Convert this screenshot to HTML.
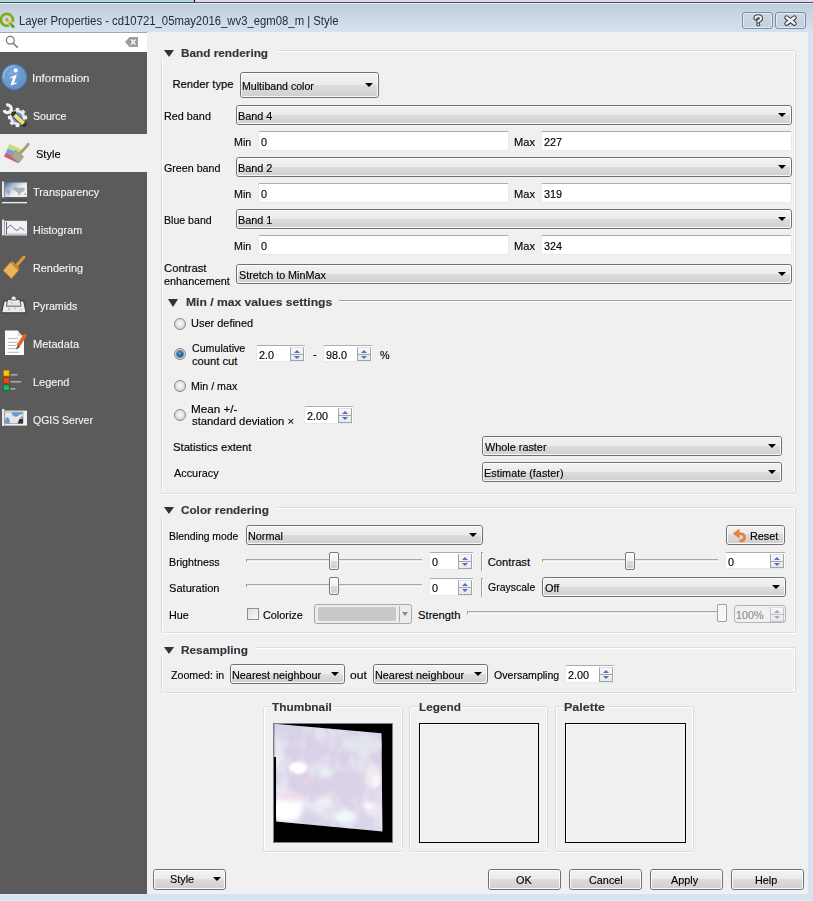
<!DOCTYPE html><html><head><meta charset="utf-8"><style>
html,body{margin:0;padding:0;}
body{width:813px;height:901px;position:relative;overflow:hidden;background:#f0f0f0;font-family:"Liberation Sans",sans-serif;}
.t{position:absolute;white-space:nowrap;line-height:1;transform-origin:0 0;-webkit-text-stroke:0.15px currentColor;}
.cb{position:absolute;box-sizing:border-box;border:1px solid #707070;border-radius:3px;background:linear-gradient(#f2f2f2 0%,#ebebeb 50%,#dddddd 50%,#cfcfcf 100%);}
.cbi{position:absolute;left:0;top:0;right:0;bottom:0;border:1px solid rgba(255,255,255,0.85);border-radius:2px;}
.arr{position:absolute;width:0;height:0;border-left:4px solid transparent;border-right:4px solid transparent;border-top:4px solid #000;}
.ed{position:absolute;box-sizing:border-box;background:#fff;border:1px solid #e3e9ef;border-top-color:#abadb3;border-radius:2px;}
.sp{position:absolute;box-sizing:border-box;border:1px solid #c9ced6;background:linear-gradient(#f7f8fa,#e6e9ee);}
.ua{position:absolute;width:0;height:0;border-left:3px solid transparent;border-right:3px solid transparent;border-bottom:3px solid #4a5f8c;}
.da{position:absolute;width:0;height:0;border-left:3px solid transparent;border-right:3px solid transparent;border-top:3px solid #4a5f8c;}
.bt{position:absolute;box-sizing:border-box;border:1px solid #707070;border-radius:3px;background:linear-gradient(#f2f2f2 0%,#ebebeb 45%,#dddddd 45%,#cfcfcf 100%);}
.bti{position:absolute;left:0;top:0;right:0;bottom:0;border:1px solid rgba(255,255,255,0.85);border-radius:2px;}
.gb{position:absolute;box-sizing:border-box;border:1px solid #d5dfe5;border-radius:2px;box-shadow:inset 1px 1px 0 #fff, inset -1px 0 0 #fff, 0 1px 0 #fff;}
.tri{position:absolute;width:0;height:0;border-left:5px solid transparent;border-right:5px solid transparent;border-top:7px solid #333;}
.rd{position:absolute;box-sizing:border-box;width:12px;height:12px;border-radius:50%;border:1px solid #8a8a8a;background:radial-gradient(circle at 50% 45%,#fbfbfb 0%,#e6e6e6 45%,#c8ccd0 80%,#f4f4f4 100%);}
.rdc{position:absolute;width:6px;height:6px;border-radius:50%;background:radial-gradient(circle at 45% 40%,#58c0f0 0%,#1d6aa8 45%,#0b3560 100%);box-shadow:0 0 0 1px rgba(20,50,90,0.55);}
.sh{position:absolute;box-sizing:border-box;border:1px solid #7b7b7b;border-radius:2px;background:linear-gradient(#fbfbfb 0%,#f0f0f0 50%,#dadada 50%,#d0d0d0 100%);box-shadow:inset 0 0 0 1px rgba(255,255,255,0.7);}
.si{position:absolute;}
</style></head><body>
<div style="position:absolute;left:0px;top:0px;width:194px;height:2px;background:#a9d7e3"></div>
<div style="position:absolute;left:194px;top:0px;width:1px;height:2px;background:#000"></div>
<div style="position:absolute;left:195px;top:0px;width:618px;height:2px;background:#e2daf0"></div>
<div style="position:absolute;left:0px;top:2px;width:813px;height:1px;background:#4d4d4d"></div>
<div style="position:absolute;left:0px;top:3px;width:813px;height:1px;background:#e6ecf2"></div>
<div style="position:absolute;left:0px;top:4px;width:813px;height:28px;background:linear-gradient(#bfcedc,#d6e3ef)"></div>
<div style="position:absolute;left:808px;top:32px;width:5px;height:869px;background:#d6e3f1"></div>
<div style="position:absolute;left:0px;top:894px;width:813px;height:7px;background:#d6e3f1"></div>
<div style="position:absolute;left:0px;top:900px;width:813px;height:1px;background:#e6edf5"></div>
<div style="position:absolute;left:0px;top:894px;width:147px;height:1px;background:#dce8f6"></div>
<div class="t" style="left:18.8995145631068px;top:15.24px;font-size:12px;color:#2a2a3a;transform:scaleX(0.9434);-webkit-text-stroke:0;">Layer Properties - cd10721_05may2016_wv3_egm08_m | Style</div>
<div style="position:absolute;left:742px;top:12px;width:31px;height:17px;box-sizing:border-box;border:1px solid #7d8ca8;border-radius:3px;background:linear-gradient(#cbd7e4,#c3d1e0);box-shadow:inset 0 0 0 1px rgba(255,255,255,0.5)"></div>
<div style="position:absolute;left:775px;top:12px;width:31px;height:17px;box-sizing:border-box;border:1px solid #7d8ca8;border-radius:3px;background:linear-gradient(#cbd7e4,#c3d1e0);box-shadow:inset 0 0 0 1px rgba(255,255,255,0.5)"></div>
<svg class="si" style="left:740px;top:10px" width="70" height="22" viewBox="740 10 70 22"><g fill="none" stroke-linecap="round" stroke-linejoin="round"><path d="M755.4 18.6 Q755.4 16.3 758.2 16.3 Q761 16.3 761 18.6 Q761 20.2 758.3 21 L758.3 22" stroke="#3c3c48" stroke-width="4"/><path d="M755.4 18.6 Q755.4 16.3 758.2 16.3 Q761 16.3 761 18.6 Q761 20.2 758.3 21 L758.3 22" stroke="#f6f6f6" stroke-width="1.9"/><path d="M786.6 17.6 L794.4 23.6 M794.4 17.6 L786.6 23.6" stroke="#3c3c48" stroke-width="4.6"/><path d="M786.6 17.6 L794.4 23.6 M794.4 17.6 L786.6 23.6" stroke="#f4f4f4" stroke-width="2.5"/></g><circle cx="758.3" cy="24.4" r="1.9" fill="#3c3c48"/><circle cx="758.3" cy="24.4" r="0.9" fill="#f6f6f6"/></svg>
<div style="position:absolute;left:0px;top:32px;width:147px;height:20px;background:#fff"></div>
<div style="position:absolute;left:0px;top:32px;width:147px;height:1px;background:#a7a7a7"></div>
<div style="position:absolute;left:0px;top:52px;width:147px;height:842px;background:#5b5b5b"></div>
<div style="position:absolute;left:0px;top:134px;width:147px;height:38px;background:#f0f0f0"></div>
<div class="t" style="left:32.45399061032864px;top:73.02px;font-size:11.2px;color:#f2f2f2;transform:scaleX(1.0273);">Information</div>
<div class="t" style="left:33.018819188191884px;top:110.97px;font-size:11.2px;color:#f2f2f2;transform:scaleX(0.9452);">Source</div>
<div class="t" style="left:35.89787234042553px;top:148.92px;font-size:11.2px;color:#000;transform:scaleX(0.9863);">Style</div>
<div class="t" style="left:33.25234521575985px;top:186.87px;font-size:11.2px;color:#f2f2f2;transform:scaleX(0.9729);">Transparency</div>
<div class="t" style="left:32.63984575835475px;top:224.82px;font-size:11.2px;color:#f2f2f2;transform:scaleX(0.9655);">Histogram</div>
<div class="t" style="left:32.63613231552163px;top:262.77px;font-size:11.2px;color:#f2f2f2;transform:scaleX(0.9696);">Rendering</div>
<div class="t" style="left:32.654901960784315px;top:300.72px;font-size:11.2px;color:#f2f2f2;transform:scaleX(0.9486);">Pyramids</div>
<div class="t" style="left:32.619166666666665px;top:338.67px;font-size:11.2px;color:#f2f2f2;transform:scaleX(0.9887);">Metadata</div>
<div class="t" style="left:32.63060498220641px;top:376.62px;font-size:11.2px;color:#f2f2f2;transform:scaleX(0.9759);">Legend</div>
<div class="t" style="left:33.02369477911647px;top:414.57px;font-size:11.2px;color:#f2f2f2;transform:scaleX(0.9356);">QGIS Server</div>
<svg class="si" style="left:0;top:0" width="147" height="440" viewBox="0 0 147 440">
<defs>
<linearGradient id="qg" x1="0" y1="0" x2="1" y2="1"><stop offset="0" stop-color="#f07a10"/><stop offset="0.35" stop-color="#e9d04a"/><stop offset="0.55" stop-color="#7cb034"/><stop offset="1" stop-color="#5a9a22"/></linearGradient>
<radialGradient id="ig" cx="0.4" cy="0.35" r="0.7"><stop offset="0" stop-color="#7aa8dc"/><stop offset="1" stop-color="#5d8fcb"/></radialGradient>
<linearGradient id="tgr" x1="0" y1="0" x2="0.8" y2="0.6"><stop offset="0" stop-color="#3c68aa"/><stop offset="0.4" stop-color="#a9bad0"/><stop offset="0.75" stop-color="#e6eaee"/><stop offset="1" stop-color="#f2f2f2"/></linearGradient>
</defs>
<!-- QGIS logo -->
<path d="M8.95 25.44 A6 6 0 1 1 12.54 21.85" fill="none" stroke="#80ac1c" stroke-width="2.7"/>
<path d="M6.6 19.5 L13.2 26.6" stroke="url(#qg)" stroke-width="2.8" stroke-linecap="round"/>
<!-- search -->
<circle cx="10.3" cy="40.3" r="3.9" fill="none" stroke="#7a7a7a" stroke-width="1.3"/>
<path d="M13.2 43.2 L17.3 47.3" stroke="#7a7a7a" stroke-width="1.6" stroke-linecap="round"/>
<path d="M125 42 L129.5 37 L138 37 L138 47 L129.5 47 Z" fill="#9d9d9d"/>
<path d="M131 39.5 L135.5 44.5 M135.5 39.5 L131 44.5" stroke="#fff" stroke-width="1.2"/>
<!-- Information -->
<circle cx="14.2" cy="77" r="12.5" fill="url(#ig)" stroke="#4c7cc0" stroke-width="0.8"/>
<path d="M4 79 A10.5 10.5 0 0 1 15 66" fill="none" stroke="#a9c6ea" stroke-width="1.1" opacity="0.8"/>
<circle cx="15.7" cy="70.4" r="2.1" fill="#fff"/>
<path d="M10.6 77.2 L16.8 74.6 L13.9 83.4 L16.8 82.3 L16.4 83.8 L10.4 85.6 L13.2 77.6 L10.3 78.4 Z" fill="#fff"/>
<!-- Source -->
<g transform="translate(17.5 117.5)">
<circle r="7.6" fill="#ececec" stroke="#d0d0d0" stroke-width="0.6"/>
<g fill="#ececec"><rect x="-1.8" y="-9.6" width="3.6" height="3"/><rect x="-1.8" y="6.6" width="3.6" height="3"/><rect x="-9.6" y="-1.8" width="3" height="3.6"/><rect x="6.6" y="-1.8" width="3" height="3.6"/>
<rect x="-1.8" y="-9.6" width="3.6" height="3" transform="rotate(45)"/><rect x="-1.8" y="6.6" width="3.6" height="3" transform="rotate(45)"/><rect x="-9.6" y="-1.8" width="3" height="3.6" transform="rotate(45)"/><rect x="6.6" y="-1.8" width="3" height="3.6" transform="rotate(45)"/></g>
<circle r="5.2" fill="#6a9ad6"/>
</g>
<path d="M6.2 105.2 A3.8 3.8 0 1 1 3.9 110.1" fill="none" stroke="#f0f0f0" stroke-width="3.2"/><path d="M10.2 111.2 L14.5 115.5" stroke="#e8e8e8" stroke-width="3.4"/>

<path d="M13.8 114.2 L24.2 124.3" stroke="#3a3a2a" stroke-width="5.6" stroke-linecap="round"/>
<path d="M14.6 115 L23.6 123.6" stroke="#f0dc7a" stroke-width="4.2" stroke-linecap="butt"/>
<path d="M13.5 113.8 L16 111.5" stroke="#222" stroke-width="1.2"/>
<!-- Style -->
<path d="M9.5 144 L22 149.4 L20.6 153.6 L7.6 148.6 Z" fill="#c6dc7c"/>
<path d="M7.6 148.6 L20.6 153.6 L19.2 157.8 L5.8 152.8 Z" fill="#6aa8e4"/>
<path d="M5.8 152.8 L19.2 157.8 L17.6 163 L4 156.5 Z" fill="#d05878"/>
<path d="M15.6 150.4 L23.6 156.6 L18.6 163 L10.6 156.2 Z" fill="#a8a890" stroke="#8a8468" stroke-width="0.6"/>
<path d="M28.4 144.2 L20.6 153" stroke="#aa9f78" stroke-width="2.8" stroke-linecap="round"/>
<!-- Transparency -->
<rect x="2" y="181.5" width="2.2" height="16" fill="#e8e8e8"/>
<rect x="4.6" y="182.5" width="22.4" height="14.5" fill="url(#tgr)"/>
<path d="M6.5 190 q2 -1 3.5 0.5 q0.5 3 -1.5 5 q-1.5 -2 -2 -5.5 z M13 188 q3 -1.5 5 0 q4 -1 7 0.5 l-1 3 q-2 0 -3 1 q-1 2 -2 3.5 q-1 -2 -1.5 -4 q-2 0 -4.5 -4 z M24 193 q1.5 0 2.5 1 l-1 1.5 q-1 0 -1.5 -2.5 z" fill="#98a0a6" opacity="0.75"/>
<rect x="2" y="199" width="25" height="2" fill="#4a4a4a"/><path d="M3 200 H27" stroke="#6a6a6a" stroke-width="0.8" stroke-dasharray="0.8 1.2"/>
<rect x="4" y="198.6" width="2.6" height="2.8" fill="#3260a8"/>
<rect x="2" y="202" width="25" height="1.3" fill="#f2f2f2"/>
<!-- Histogram -->
<rect x="2" y="219.5" width="2.2" height="16" fill="#e6e6e6"/>
<rect x="4.6" y="220.8" width="22.4" height="14.5" fill="#f1f1f1"/>
<rect x="4.6" y="233.4" width="22.4" height="1.9" fill="#c9c9c9"/>
<rect x="6" y="222" width="0.9" height="12" fill="#555"/>
<path d="M6.7 228.7 L10.4 225 L13.4 228 L17 230.6 L20.4 227.4 L24.3 230.4" fill="none" stroke="#3d64a8" stroke-width="0.9"/>
<!-- Rendering -->
<path d="M24 257 L16.5 265.5" stroke="#d99a36" stroke-width="3" stroke-linecap="round"/>
<path d="M10.4 262.2 L18.6 270.2 L11.4 278.6 L3.2 270.6 Z" fill="#e8b860" stroke="#c08030" stroke-width="0.8"/>
<path d="M12.4 261 L19.4 268 L17.6 270.4 L10.6 263.2 Z" fill="#d08a2a"/>
<!-- Pyramids -->
<path d="M4.2 301 L23.6 301 L26.2 312.8 L1.6 312.8 Z" fill="#ececec" stroke="#2a2a2a" stroke-width="0.9"/>
<path d="M7.6 299.4 L19.8 299.4 L21 306.2 L6.4 306.2 Z" fill="#e6e6e6" stroke="#3a3a3a" stroke-width="0.8"/>
<path d="M10.8 300 Q11 296 13.6 296 Q16.4 296 16.6 300 Z" fill="#f2f2f2" stroke="#3a3a3a" stroke-width="0.7"/>
<g fill="#b8bcb8" opacity="0.8"><circle cx="9" cy="309" r="1.2"/><circle cx="15" cy="308.5" r="1.1"/><circle cx="21" cy="310" r="1"/><circle cx="12" cy="303" r="0.9"/></g>
<!-- Metadata -->
<path d="M5 330.6 L17.6 330.6 L21.8 335.6 L24 335.6 L24 355.1 L5 355.1 Z" fill="#fdfdfd"/>
<path d="M17.6 330.6 L17.6 336 L21.8 336 Z" fill="#e0e0e0"/>
<g stroke="#b8b8b8" stroke-width="1"><path d="M7.7 338.6 H18 M7.7 342.3 H17 M7.7 345.5 H16 M7.7 348.6 H17 M7.7 352.3 H19"/></g>
<path d="M25.6 334.6 L18 346" stroke="#e2642a" stroke-width="3.6"/>
<path d="M18.2 345.6 L16.4 348.8 L19.2 347.2 Z" fill="#555" stroke="#555" stroke-width="1"/>
<!-- Legend -->
<rect x="3.6" y="370.2" width="5.6" height="5.8" fill="#f8c800" stroke="#b07800" stroke-width="0.6"/>
<rect x="3.6" y="377.6" width="5.6" height="5.8" fill="#e84a14" stroke="#9a2a00" stroke-width="0.6"/>
<rect x="3.6" y="385" width="5.6" height="5.6" fill="#1cb85a" stroke="#0a5a2a" stroke-width="0.6"/>
<rect x="10.6" y="374" width="7" height="1.6" fill="#a8a8a8"/>
<rect x="10.6" y="381" width="10.6" height="1.6" fill="#a8a8a8"/>
<rect x="10.6" y="388" width="4.6" height="1.6" fill="#a8a8a8"/>
<!-- QGIS Server -->
<rect x="2" y="409" width="2.4" height="17" fill="#e8e8e8"/>
<rect x="4.6" y="410.6" width="22.4" height="15" fill="#f0f0f0"/>
<rect x="4.8" y="412" width="18.2" height="11.5" fill="#e6e6e6" stroke="#777" stroke-width="0.5"/>
<path d="M12 412.3 L23 412.3 L22.8 413.5 Q19 415 17 416.6 Q14 417 12.5 415 Q11 413.6 12 412.3 Z" fill="#6a9ad6"/>
<path d="M4.9 423.4 L4.9 420 Q6 416.6 8 417 Q9.5 419 10 423.4 Z" fill="#6a9ad6"/>
<path d="M19.6 418.6 Q21 416.2 23 416.2 L23 419 Z" fill="#6a9ad6"/>
<path d="M17.6 423.6 L23 423.6 L23 419 L19.4 419 Z" fill="#333"/>
</svg>
<div class="gb" style="left:161px;top:50px;width:635px;height:444px;"></div>
<div style="position:absolute;left:160px;top:47px;width:116px;height:12px;background:#f0f0f0"></div>
<div class="tri" style="left:164px;top:50px;"></div>
<div class="t" style="left:181.1962441314554px;top:46.98px;font-size:11.6px;font-weight:bold;color:#30363e;transform:scaleX(1.0162);">Band rendering</div>
<div class="t" style="left:172.51004273504273px;top:79.22px;font-size:11.2px;color:#000;">Render type</div>
<div class="cb" style="left:240px;top:72px;width:139px;height:26px;"><div class="cbi"></div></div>
<div class="arr" style="left:365px;top:83px;"></div>
<div class="t" style="left:242.15595238095239px;top:80.82px;font-size:11.2px;color:#000;transform:scaleX(0.9474);">Multiband color</div>
<div class="t" style="left:163.5387533875339px;top:111.22px;font-size:11.2px;color:#000;transform:scaleX(0.9667);">Red band</div>
<div class="cb" style="left:236px;top:105px;width:556px;height:20px;"><div class="cbi"></div></div>
<div class="arr" style="left:778px;top:113px;"></div>
<div class="t" style="left:238.1358181818182px;top:110.82px;font-size:11.2px;color:#000;transform:scaleX(0.9700);">Band 4</div>
<div class="t" style="left:234.4480620155039px;top:136.62px;font-size:11.2px;color:#000;transform:scaleX(0.9563);">Min</div>
<div class="ed" style="left:258px;top:131px;width:251px;height:20px;"></div>
<div class="t" style="left:260.62963636363634px;top:136.82px;font-size:11.2px;color:#000;transform:scaleX(0.9700);">0</div>
<div class="t" style="left:513.7183544303798px;top:136.62px;font-size:11.2px;color:#000;transform:scaleX(0.9896);">Max</div>
<div class="ed" style="left:541px;top:131px;width:251px;height:20px;"></div>
<div class="t" style="left:543.5061818181819px;top:136.82px;font-size:11.2px;color:#000;transform:scaleX(0.9700);">227</div>
<div class="t" style="left:163.91384615384615px;top:163.22px;font-size:11.2px;color:#000;transform:scaleX(0.9549);">Green band</div>
<div class="cb" style="left:236px;top:157px;width:556px;height:20px;"><div class="cbi"></div></div>
<div class="arr" style="left:778px;top:165px;"></div>
<div class="t" style="left:238.1358181818182px;top:162.82px;font-size:11.2px;color:#000;transform:scaleX(0.9700);">Band 2</div>
<div class="t" style="left:234.4480620155039px;top:188.62px;font-size:11.2px;color:#000;transform:scaleX(0.9563);">Min</div>
<div class="ed" style="left:258px;top:183px;width:251px;height:20px;"></div>
<div class="t" style="left:260.62963636363634px;top:188.82px;font-size:11.2px;color:#000;transform:scaleX(0.9700);">0</div>
<div class="t" style="left:513.7183544303798px;top:188.62px;font-size:11.2px;color:#000;transform:scaleX(0.9896);">Max</div>
<div class="ed" style="left:541px;top:183px;width:251px;height:20px;"></div>
<div class="t" style="left:543.6296363636363px;top:188.82px;font-size:11.2px;color:#000;transform:scaleX(0.9700);">319</div>
<div class="t" style="left:163.5574412532637px;top:215.22px;font-size:11.2px;color:#000;transform:scaleX(0.9457);">Blue band</div>
<div class="cb" style="left:236px;top:209px;width:556px;height:20px;"><div class="cbi"></div></div>
<div class="arr" style="left:778px;top:217px;"></div>
<div class="t" style="left:238.1358181818182px;top:214.82px;font-size:11.2px;color:#000;transform:scaleX(0.9700);">Band 1</div>
<div class="t" style="left:234.4480620155039px;top:240.62px;font-size:11.2px;color:#000;transform:scaleX(0.9563);">Min</div>
<div class="ed" style="left:258px;top:235px;width:251px;height:20px;"></div>
<div class="t" style="left:260.62963636363634px;top:240.82px;font-size:11.2px;color:#000;transform:scaleX(0.9700);">0</div>
<div class="t" style="left:513.7183544303798px;top:240.62px;font-size:11.2px;color:#000;transform:scaleX(0.9896);">Max</div>
<div class="ed" style="left:541px;top:235px;width:251px;height:20px;"></div>
<div class="t" style="left:543.6296363636363px;top:240.82px;font-size:11.2px;color:#000;transform:scaleX(0.9700);">324</div>
<div class="t" style="left:164.09024390243903px;top:262.82px;font-size:11.2px;color:#000;">Contrast</div>
<div class="t" style="left:164.10618181818182px;top:275.52px;font-size:11.2px;color:#000;transform:scaleX(0.9700);">enhancement</div>
<div class="cb" style="left:236px;top:264px;width:556px;height:20px;"><div class="cbi"></div></div>
<div class="arr" style="left:778px;top:272px;"></div>
<div class="t" style="left:238.50965909090908px;top:269.82px;font-size:11.2px;color:#000;transform:scaleX(0.9632);">Stretch to MinMax</div>
<div class="tri" style="left:167.5px;top:298.6px;border-left-width:5.5px;border-right-width:5.5px;border-top-width:8px"></div>
<div class="t" style="left:185.77278782112273px;top:296.48px;font-size:11.6px;font-weight:bold;color:#30363e;transform:scaleX(1.0459);">Min / max values settings</div>
<div style="position:absolute;left:339px;top:300px;width:453px;height:1px;background:#a0a0a0"></div>
<div style="position:absolute;left:339px;top:301px;width:453px;height:1px;background:#fff"></div>
<div class="rd" style="left:174px;top:318px;"></div>
<div class="t" style="left:191.12716049382715px;top:318.32px;font-size:11.2px;color:#000;transform:scaleX(0.9797);">User defined</div>
<div class="rd" style="left:174px;top:348px;"></div>
<div class="rdc" style="left:177px;top:351px;"></div>
<div class="t" style="left:192.01574074074074px;top:343.12px;font-size:11.2px;color:#000;transform:scaleX(0.9512);">Cumulative</div>
<div class="t" style="left:191.9912181303116px;top:355.52px;font-size:11.2px;color:#000;">count cut</div>
<div class="ed" style="left:256px;top:345px;width:50px;height:17px;"></div>
<div class="t" style="left:258.5061818181818px;top:349.82px;font-size:11.2px;color:#000;transform:scaleX(0.9700);">2.0</div>
<div class="sp" style="left:290px;top:347px;width:14px;height:14px;border-color:#a4a4a4;border-top-color:#e0e0e0"></div>
<div style="position:absolute;left:291px;top:354px;width:12px;height:1px;background:#a4a4a4"></div>
<div class="ua" style="left:294px;top:350px;border-bottom-color:#5470c0"></div>
<div class="da" style="left:294px;top:356px;border-top-color:#5470c0"></div>
<div class="t" style="left:313.0061818181818px;top:349.02px;font-size:11.2px;color:#000;transform:scaleX(0.9700);">-</div>
<div class="ed" style="left:323px;top:345px;width:50px;height:17px;"></div>
<div class="t" style="left:325.5061818181818px;top:349.82px;font-size:11.2px;color:#000;transform:scaleX(0.9700);">98.0</div>
<div class="sp" style="left:357px;top:347px;width:14px;height:14px;border-color:#a4a4a4;border-top-color:#e0e0e0"></div>
<div style="position:absolute;left:358px;top:354px;width:12px;height:1px;background:#a4a4a4"></div>
<div class="ua" style="left:361px;top:350px;border-bottom-color:#5470c0"></div>
<div class="da" style="left:361px;top:356px;border-top-color:#5470c0"></div>
<div class="t" style="left:379.62963636363634px;top:349.52px;font-size:11.2px;color:#000;transform:scaleX(0.9700);">%</div>
<div class="rd" style="left:174px;top:380px;"></div>
<div class="t" style="left:191.14986595174264px;top:380.62px;font-size:11.2px;color:#000;transform:scaleX(0.9542);">Min / max</div>
<div class="rd" style="left:174px;top:409px;"></div>
<div class="t" style="left:191.07011834319528px;top:404.22px;font-size:11.2px;color:#000;transform:scaleX(1.0437);">Mean +/-</div>
<div class="t" style="left:191.6145038167939px;top:416.02px;font-size:11.2px;color:#000;transform:scaleX(1.0096);">standard deviation ×</div>
<div class="ed" style="left:304px;top:406px;width:50px;height:18px;"></div>
<div class="t" style="left:306.5061818181818px;top:411.32px;font-size:11.2px;color:#000;transform:scaleX(0.9700);">2.00</div>
<div class="sp" style="left:338px;top:408px;width:14px;height:15px;border-color:#a4a4a4;border-top-color:#e0e0e0"></div>
<div style="position:absolute;left:339px;top:415px;width:12px;height:1px;background:#a4a4a4"></div>
<div class="ua" style="left:342px;top:411px;border-bottom-color:#5470c0"></div>
<div class="da" style="left:342px;top:417px;border-top-color:#5470c0"></div>
<div class="t" style="left:173.09150326797385px;top:441.72px;font-size:11.2px;color:#000;">Statistics extent</div>
<div class="cb" style="left:482px;top:436px;width:300px;height:20px;"><div class="cbi"></div></div>
<div class="arr" style="left:768px;top:444px;"></div>
<div class="t" style="left:485.0px;top:441.82px;font-size:11.2px;color:#000;transform:scaleX(0.9700);">Whole raster</div>
<div class="t" style="left:173.6px;top:467.72px;font-size:11.2px;color:#000;transform:scaleX(0.9700);">Accuracy</div>
<div class="cb" style="left:482px;top:462px;width:300px;height:20px;"><div class="cbi"></div></div>
<div class="arr" style="left:768px;top:470px;"></div>
<div class="t" style="left:484.1358181818182px;top:467.82px;font-size:11.2px;color:#000;transform:scaleX(0.9700);">Estimate (faster)</div>
<div class="gb" style="left:161px;top:507px;width:635px;height:126px;"></div>
<div style="position:absolute;left:160px;top:504px;width:116px;height:12px;background:#f0f0f0"></div>
<div class="tri" style="left:164px;top:507px;"></div>
<div class="t" style="left:181.46707692307692px;top:504.18px;font-size:11.6px;font-weight:bold;color:#30363e;transform:scaleX(1.0107);">Color rendering</div>
<div class="t" style="left:169.17239583333333px;top:530.52px;font-size:11.2px;color:#000;transform:scaleX(0.9289);">Blending mode</div>
<div class="cb" style="left:246px;top:525px;width:237px;height:20px;"><div class="cbi"></div></div>
<div class="arr" style="left:469px;top:533px;"></div>
<div class="t" style="left:248.1358181818182px;top:530.82px;font-size:11.2px;color:#000;transform:scaleX(0.9700);">Normal</div>
<div class="bt" style="left:726px;top:525px;width:59px;height:20px;"><div class="bti"></div></div>
<div class="t" style="left:749.7358181818182px;top:531.02px;font-size:11.2px;color:#000;transform:scaleX(0.9700);">Reset</div>
<svg class="si" style="left:728px;top:524px" width="22" height="22" viewBox="728 524 22 22"><path d="M732.8 533.6 L739.4 528.6 L739.4 538.6 Z" fill="#e8803c"/><path d="M738.6 533.6 Q744.6 533.4 744.6 537.4 Q744.6 540.6 740.6 540.8" fill="none" stroke="#e8803c" stroke-width="2.8" stroke-linecap="round"/></svg>
<div class="t" style="left:169.14655172413794px;top:556.52px;font-size:11.2px;color:#000;transform:scaleX(0.9580);">Brightness</div>
<div style="position:absolute;left:246px;top:559px;width:176px;height:1px;background:#a8a8a8"></div>
<div style="position:absolute;left:246px;top:560px;width:176px;height:1px;background:#e4e8ea"></div>
<div style="position:absolute;left:246px;top:561px;width:176px;height:1px;background:#fafafa"></div>
<div style="position:absolute;left:246px;top:559px;width:1px;height:3px;background:#a0a0a0"></div>
<div class="sh" style="left:329px;top:552px;width:10px;height:18px;"></div>
<div class="ed" style="left:429px;top:552px;width:45px;height:18px;"></div>
<div class="t" style="left:431.62963636363634px;top:557.32px;font-size:11.2px;color:#000;transform:scaleX(0.9700);">0</div>
<div class="sp" style="left:458px;top:554px;width:14px;height:15px;border-color:#a4a4a4;border-top-color:#e0e0e0"></div>
<div style="position:absolute;left:459px;top:561px;width:12px;height:1px;background:#a4a4a4"></div>
<div class="ua" style="left:462px;top:557px;border-bottom-color:#5470c0"></div>
<div class="da" style="left:462px;top:563px;border-top-color:#5470c0"></div>
<div style="position:absolute;left:481px;top:552px;width:1px;height:19px;background:#a0a0a0"></div>
<div style="position:absolute;left:482px;top:552px;width:1px;height:19px;background:#fafafa"></div>
<div style="position:absolute;left:481px;top:552px;width:2px;height:1px;background:#a0a0a0"></div>
<div class="t" style="left:487.79024390243904px;top:556.72px;font-size:11.2px;color:#000;">Contrast</div>
<div style="position:absolute;left:542px;top:559px;width:176px;height:1px;background:#a8a8a8"></div>
<div style="position:absolute;left:542px;top:560px;width:176px;height:1px;background:#e4e8ea"></div>
<div style="position:absolute;left:542px;top:561px;width:176px;height:1px;background:#fafafa"></div>
<div style="position:absolute;left:542px;top:559px;width:1px;height:3px;background:#a0a0a0"></div>
<div class="sh" style="left:625px;top:552px;width:10px;height:18px;"></div>
<div class="ed" style="left:725px;top:552px;width:61px;height:17px;"></div>
<div class="t" style="left:727.6296363636363px;top:556.82px;font-size:11.2px;color:#000;transform:scaleX(0.9700);">0</div>
<div class="sp" style="left:770px;top:554px;width:14px;height:14px;border-color:#a4a4a4;border-top-color:#e0e0e0"></div>
<div style="position:absolute;left:771px;top:561px;width:12px;height:1px;background:#a4a4a4"></div>
<div class="ua" style="left:774px;top:557px;border-bottom-color:#5470c0"></div>
<div class="da" style="left:774px;top:563px;border-top-color:#5470c0"></div>
<div class="t" style="left:169.49565217391304px;top:582.82px;font-size:11.2px;color:#000;transform:scaleX(0.9907);">Saturation</div>
<div style="position:absolute;left:246px;top:584px;width:176px;height:1px;background:#a8a8a8"></div>
<div style="position:absolute;left:246px;top:585px;width:176px;height:1px;background:#e4e8ea"></div>
<div style="position:absolute;left:246px;top:586px;width:176px;height:1px;background:#fafafa"></div>
<div style="position:absolute;left:246px;top:584px;width:1px;height:3px;background:#a0a0a0"></div>
<div class="sh" style="left:329px;top:577px;width:10px;height:18px;"></div>
<div class="ed" style="left:429px;top:578px;width:45px;height:18px;"></div>
<div class="t" style="left:431.62963636363634px;top:583.32px;font-size:11.2px;color:#000;transform:scaleX(0.9700);">0</div>
<div class="sp" style="left:458px;top:580px;width:14px;height:15px;border-color:#a4a4a4;border-top-color:#e0e0e0"></div>
<div style="position:absolute;left:459px;top:587px;width:12px;height:1px;background:#a4a4a4"></div>
<div class="ua" style="left:462px;top:583px;border-bottom-color:#5470c0"></div>
<div class="da" style="left:462px;top:589px;border-top-color:#5470c0"></div>
<div style="position:absolute;left:481px;top:578px;width:1px;height:19px;background:#a0a0a0"></div>
<div style="position:absolute;left:482px;top:578px;width:1px;height:19px;background:#fafafa"></div>
<div style="position:absolute;left:481px;top:578px;width:2px;height:1px;background:#a0a0a0"></div>
<div class="t" style="left:487.82268041237114px;top:582.32px;font-size:11.2px;color:#000;transform:scaleX(0.9376);">Grayscale</div>
<div class="cb" style="left:542px;top:577px;width:244px;height:20px;"><div class="cbi"></div></div>
<div class="arr" style="left:772px;top:585px;"></div>
<div class="t" style="left:544.5061818181819px;top:582.82px;font-size:11.2px;color:#000;transform:scaleX(0.9700);">Off</div>
<div class="t" style="left:169.14133333333334px;top:609.62px;font-size:11.2px;color:#000;transform:scaleX(0.9638);">Hue</div>
<div style="position:absolute;left:247px;top:608px;width:12px;height:12px;box-sizing:border-box;border:1px solid #8e8f8f;background:linear-gradient(135deg,#dcdcdc,#fafafa)"></div>
<div class="t" style="left:263.0061818181818px;top:609.62px;font-size:11.2px;color:#000;transform:scaleX(0.9700);">Colorize</div>
<div style="position:absolute;left:314px;top:604px;width:98px;height:20px;box-sizing:border-box;border:1px solid #a8a8a8;border-radius:3px;background:#ececec"></div>
<div style="position:absolute;left:318px;top:607px;width:78px;height:14px;background:#c8c8c8;border-radius:2px"></div>
<div style="position:absolute;left:399px;top:606px;width:1px;height:16px;background:#b0b0b0"></div>
<div class="arr" style="left:402px;top:612px;border-top-color:#8a8a8a;border-left-width:3.5px;border-right-width:3.5px;border-top-width:4px"></div>
<div class="t" style="left:418.0885448916409px;top:609.62px;font-size:11.2px;color:#000;">Strength</div>
<div style="position:absolute;left:467px;top:611px;width:260px;height:1px;background:#a8a8a8"></div>
<div style="position:absolute;left:467px;top:612px;width:260px;height:1px;background:#e4e8ea"></div>
<div style="position:absolute;left:467px;top:613px;width:260px;height:1px;background:#fafafa"></div>
<div style="position:absolute;left:467px;top:611px;width:1px;height:3px;background:#a0a0a0"></div>
<div class="sh" style="left:717px;top:604px;width:10px;height:18px;"></div>
<div class="sh" style="left:717px;top:604px;width:10px;height:18px;background:#f6f6f6;border-color:#a0a0a0"></div>
<div class="ed" style="left:734px;top:605px;width:52px;height:18px;background:#f0f0f0;border-color:#b4b4b4;border-radius:3px"></div>
<div class="t" style="left:736.1358181818182px;top:610.32px;font-size:11.2px;color:#8c8c8c;transform:scaleX(0.9700);">100%</div>
<div class="sp" style="left:770px;top:607px;width:14px;height:15px;border-color:#c4c4c4;border-top-color:#e0e0e0"></div>
<div style="position:absolute;left:771px;top:614px;width:12px;height:1px;background:#c4c4c4"></div>
<div class="ua" style="left:774px;top:610px;border-bottom-color:#a8a8b8"></div>
<div class="da" style="left:774px;top:616px;border-top-color:#a8a8b8"></div>
<div class="gb" style="left:161px;top:647px;width:635px;height:46px;"></div>
<div style="position:absolute;left:160px;top:644px;width:96px;height:12px;background:#f0f0f0"></div>
<div class="tri" style="left:164px;top:647px;"></div>
<div class="t" style="left:181.49301848049282px;top:644.28px;font-size:11.6px;font-weight:bold;color:#30363e;transform:scaleX(1.0203);">Resampling</div>
<div class="t" style="left:170.63735498839907px;top:670.02px;font-size:11.2px;color:#000;transform:scaleX(0.9498);">Zoomed: in</div>
<div class="cb" style="left:230px;top:664px;width:115px;height:20px;"><div class="cbi"></div></div>
<div class="arr" style="left:331px;top:672px;"></div>
<div class="t" style="left:232.13673184357543px;top:669.82px;font-size:11.2px;color:#000;transform:scaleX(0.9690);">Nearest neighbour</div>
<div class="t" style="left:349.9508474576271px;top:670.02px;font-size:11.2px;color:#000;transform:scaleX(1.0787);">out</div>
<div class="cb" style="left:373px;top:664px;width:115px;height:20px;"><div class="cbi"></div></div>
<div class="arr" style="left:474px;top:672px;"></div>
<div class="t" style="left:375.13673184357543px;top:669.82px;font-size:11.2px;color:#000;transform:scaleX(0.9690);">Nearest neighbour</div>
<div class="t" style="left:493.5189493433396px;top:670.02px;font-size:11.2px;color:#000;transform:scaleX(0.9449);">Oversampling</div>
<div class="ed" style="left:565px;top:665px;width:50px;height:18px;"></div>
<div class="t" style="left:567.5061818181819px;top:670.32px;font-size:11.2px;color:#000;transform:scaleX(0.9700);">2.00</div>
<div class="sp" style="left:599px;top:667px;width:14px;height:15px;border-color:#a4a4a4;border-top-color:#e0e0e0"></div>
<div style="position:absolute;left:600px;top:674px;width:12px;height:1px;background:#a4a4a4"></div>
<div class="ua" style="left:603px;top:670px;border-bottom-color:#5470c0"></div>
<div class="da" style="left:603px;top:676px;border-top-color:#5470c0"></div>
<div class="gb" style="left:263px;top:706px;width:140px;height:146px;"></div>
<div style="position:absolute;left:270.6px;top:703px;width:62.69999999999999px;height:6px;background:#f0f0f0"></div>
<div class="t" style="left:272.4656750572083px;top:701.48px;font-size:11.6px;font-weight:bold;color:#30363e;transform:scaleX(1.0190);">Thumbnail</div>
<div class="gb" style="left:409px;top:706px;width:139px;height:146px;"></div>
<div style="position:absolute;left:417.6px;top:703px;width:44.30000000000001px;height:6px;background:#f0f0f0"></div>
<div class="t" style="left:418.7966777408638px;top:701.48px;font-size:11.6px;font-weight:bold;color:#30363e;transform:scaleX(1.0157);">Legend</div>
<div class="gb" style="left:555px;top:706px;width:139px;height:146px;"></div>
<div style="position:absolute;left:563.2px;top:703px;width:44.700000000000045px;height:6px;background:#f0f0f0"></div>
<div class="t" style="left:564.3458181818182px;top:701.48px;font-size:11.6px;font-weight:bold;color:#30363e;transform:scaleX(1.0800);">Palette</div>
<div style="position:absolute;left:419px;top:723px;width:120px;height:120px;box-sizing:border-box;border:1px solid #000;box-shadow:inset 1px 1px 0 #fff"></div>
<div style="position:absolute;left:565px;top:723px;width:121px;height:120px;box-sizing:border-box;border:1px solid #000;box-shadow:inset 1px 1px 0 #fff"></div>
<svg class="si" style="left:273px;top:723px" width="120" height="120" viewBox="0 0 120 120">
<defs>
<filter id="cl" x="0" y="0" width="100%" height="100%"><feTurbulence type="fractalNoise" baseFrequency="0.06 0.04" numOctaves="3" seed="11" result="n"/>
<feColorMatrix in="n" type="matrix" values="0 0 0 0 1  0 0 0 0 1  0 0 0 0 1  0 0 0 -2.6 1.45" result="w"/>
<feComposite in="w" in2="SourceGraphic" operator="in"/></filter>
<filter id="bl" x="-50%" y="-50%" width="200%" height="200%"><feGaussianBlur stdDeviation="2.6"/></filter>
<filter id="bl2" x="-50%" y="-50%" width="200%" height="200%"><feGaussianBlur stdDeviation="1.2"/></filter>
<linearGradient id="tbg" x1="0" y1="0" x2="1" y2="1"><stop offset="0" stop-color="#d8d0e8"/><stop offset="0.45" stop-color="#d9d2e7"/><stop offset="1" stop-color="#dcd6ea"/></linearGradient>
<clipPath id="tc"><polygon points="1.2,0.7 108.5,10.3 109.4,108.5 3.2,98.5 3,34 1.2,34"/></clipPath>
</defs>
<rect x="0" y="0" width="120" height="120" fill="#000"/>
<g clip-path="url(#tc)">
<rect x="0" y="0" width="120" height="120" fill="url(#tbg)"/>
<rect x="0" y="0" width="120" height="120" fill="#000" filter="url(#cl)" opacity="0.5"/>
<g filter="url(#bl)">
<ellipse cx="90" cy="22" rx="22" ry="9" fill="#e2e4ee"/>
<path d="M2 62 Q30 72 60 92 L56 98 Q28 80 2 72 Z" fill="#eae6f2"/>
<ellipse cx="14" cy="86" rx="16" ry="13" fill="#fff"/>
<ellipse cx="18" cy="74" rx="14" ry="4" fill="#f2dcea"/>
<ellipse cx="72" cy="94" rx="11" ry="6" fill="#f0fafa"/>
<ellipse cx="52" cy="50" rx="7" ry="5" fill="#e6f2f4"/>
<ellipse cx="100" cy="54" rx="8" ry="12" fill="#f4eaf2"/>
<ellipse cx="98" cy="84" rx="7" ry="6" fill="#f2e8f0"/>
<ellipse cx="50" cy="80" rx="8" ry="6" fill="#eaf2f4"/>
</g>
<g filter="url(#bl2)">
<ellipse cx="25" cy="45" rx="9" ry="6" fill="#fff"/>
<ellipse cx="19" cy="50" rx="3" ry="2" fill="#f4d4e4"/>
<ellipse cx="34" cy="58" rx="3" ry="2" fill="#f0d0e0"/>
<ellipse cx="103" cy="58" rx="4" ry="6" fill="#fbf4f8"/>
<ellipse cx="96" cy="83" rx="5" ry="3" fill="#fbf4f8"/>
<ellipse cx="10" cy="88" rx="9" ry="8" fill="#fff"/>
</g>
</g>
<rect x="0.5" y="0.5" width="119" height="119" fill="none" stroke="#7a808c" stroke-width="1"/>
</svg>
<div class="bt" style="left:153px;top:869px;width:73px;height:21px;"><div class="bti"></div></div>
<div class="t" style="left:169.90618181818184px;top:874.32px;font-size:11.2px;color:#000;transform:scaleX(0.9700);">Style</div>
<div class="arr" style="left:213px;top:877px;"></div>
<div class="bt" style="left:488px;top:869px;width:73px;height:21px;"><div class="bti"></div></div>
<div class="t" style="left:516.0061818181819px;top:874.52px;font-size:11.2px;color:#000;transform:scaleX(0.9700);">OK</div>
<div class="bt" style="left:569px;top:869px;width:73px;height:21px;"><div class="bti"></div></div>
<div class="t" style="left:588.5061818181819px;top:874.52px;font-size:11.2px;color:#000;transform:scaleX(0.9700);">Cancel</div>
<div class="bt" style="left:650px;top:869px;width:73px;height:21px;"><div class="bti"></div></div>
<div class="t" style="left:671.0px;top:874.52px;font-size:11.2px;color:#000;transform:scaleX(0.9700);">Apply</div>
<div class="bt" style="left:731px;top:869px;width:73px;height:21px;"><div class="bti"></div></div>
<div class="t" style="left:755.1358181818182px;top:874.52px;font-size:11.2px;color:#000;transform:scaleX(0.9700);">Help</div>
</body></html>
